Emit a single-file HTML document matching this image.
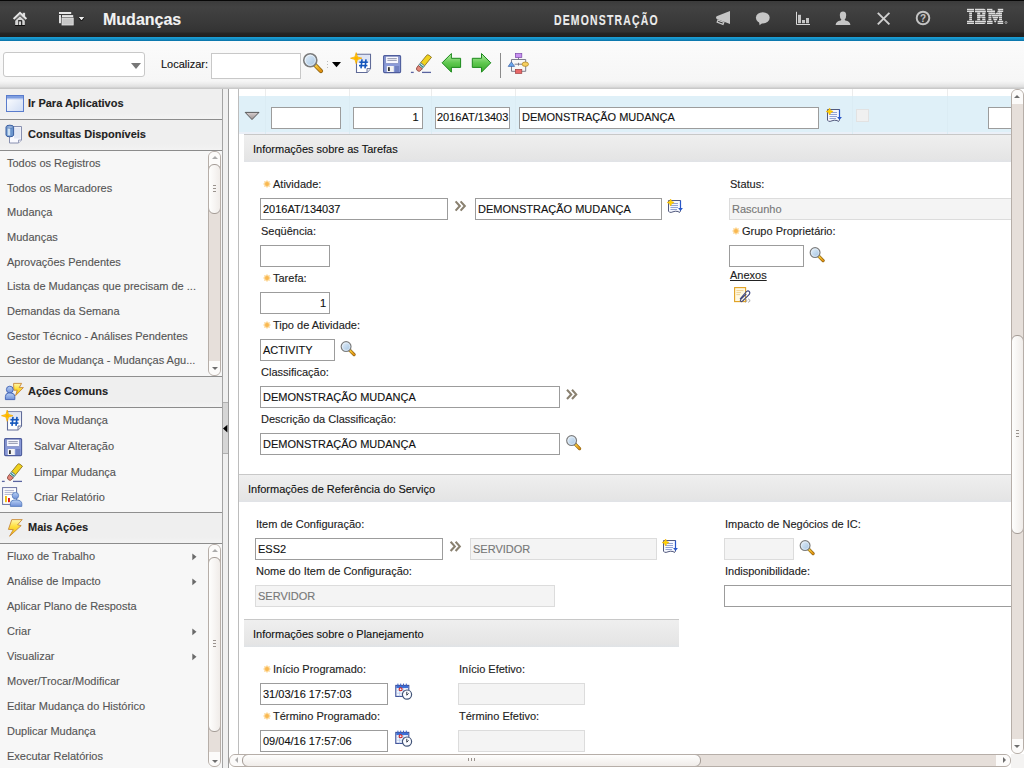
<!DOCTYPE html>
<html><head><meta charset="utf-8">
<style>
*{box-sizing:border-box;margin:0;padding:0}
html,body{width:1024px;height:768px;overflow:hidden;background:#fff;font-family:"Liberation Sans",sans-serif;font-size:11px;color:#333}
.t,.lbl,.val,.li,.rov{-webkit-text-stroke:0.12px currentColor}
.a{position:absolute}
.t{position:absolute;white-space:nowrap;line-height:13px;font-size:11px}
#hdr{left:0;top:0;width:1024px;height:37px;background:linear-gradient(#070707 0,#070707 1px,#3b3b3b 1px,#424242 7px,#3d3d3d 16px,#363636 28px,#323232 32px,#262626 33px,#202020 37px)}
#blue{left:0;top:37px;width:1024px;height:4px;background:linear-gradient(#1c9ed4,#1592c9 50%,#0870a6)}
#tb{left:0;top:41px;width:1024px;height:48px;background:linear-gradient(#fbfbfb 0,#f6f6f6 40px,#ececec 43px,#dedede 46px,#c9c9c9 47px,#c9c9c9 48px)}
.inp{position:absolute;background:#fff;border:1px solid #9c9c9c;height:22px}
.ro{position:absolute;background:#f4f4f4;border:1px solid #dcdcdc;height:22px}
.lbl{position:absolute;white-space:nowrap;line-height:13px;font-size:11px;color:#222}
.val{position:absolute;white-space:nowrap;line-height:13px;font-size:11px;color:#111}
.rov{position:absolute;white-space:nowrap;line-height:13px;font-size:11px;color:#777}
.ast{position:absolute;width:8px;height:8px}
.lph{position:absolute;left:0;width:222px;height:31px;background:linear-gradient(#efefef 0,#efefef 80%,#f3f3f3 100%);border-bottom:1px solid #8c8c8c}
.lph .t{font-weight:bold;color:#222;left:28px}
.li{position:absolute;left:7px;white-space:nowrap;line-height:13px;font-size:11px;color:#555}
.sec{position:absolute;height:28px;background:linear-gradient(#efefef,#e5e5e5 88%,#e0e3e7);border-top:1px solid #c8c8c8}
.sec .t{color:#111}
.vsb{position:absolute;background:#e6dfda;border:1px solid #b6aea8;border-radius:6px;overflow:hidden}
.vsb .c1,.vsb .c2,.hsb .c1,.hsb .c2{position:absolute;background:#fcfbfa}
.vsb .c1{left:0;right:0;top:0;height:14px}
.vsb .c2{left:0;right:0;bottom:0;height:14px}
.vsb .th{position:absolute;left:-1px;right:-1px;background:linear-gradient(90deg,#fefefd,#f0ece9);border:1px solid #a49c96;border-radius:6px}
.hsb{position:absolute;background:#e6dfda;border:1px solid #b6aea8;border-radius:6px;overflow:hidden}
.hsb .c1{top:0;bottom:0;left:0;width:14px}
.hsb .c2{top:0;bottom:0;right:0;width:14px}
.hsb .th{position:absolute;top:-1px;bottom:-1px;background:linear-gradient(#fefefd,#f0ece9);border:1px solid #a49c96;border-radius:6px}
.tu{position:absolute;width:0;height:0;border-left:3px solid transparent;border-right:3px solid transparent;border-bottom:3px solid #6e6e6e}
.td{position:absolute;width:0;height:0;border-left:3px solid transparent;border-right:3px solid transparent;border-top:3px solid #6e6e6e}
.tl{position:absolute;width:0;height:0;border-top:3px solid transparent;border-bottom:3px solid transparent;border-right:3px solid #ababab}
.tr{position:absolute;width:0;height:0;border-top:3px solid transparent;border-bottom:3px solid transparent;border-left:3px solid #6e6e6e}
.grv{position:absolute;width:3px;height:1px;background:#9a938e}
.grh{position:absolute;width:1px;height:3px;background:#9a938e}
</style></head><body>
<!-- HEADER -->
<div id="hdr" class="a"></div>
<div id="blue" class="a"></div>
<div class="t" style="left:103px;top:11px;font-size:16px;line-height:18px;font-weight:bold;color:#f2f2f2">Mudanças</div>
<div class="t" style="left:554px;top:12px;font-size:14px;line-height:17px;font-weight:bold;color:#ececec;letter-spacing:1.6px;transform:scaleX(0.745);transform-origin:0 0">DEMONSTRAÇÃO</div>

<!-- TOOLBAR -->
<div id="tb" class="a"></div>
<div class="a" style="left:3px;top:52px;width:142px;height:25px;background:#fff;border:1px solid #c8c8c8;border-radius:3px"></div>
<div class="a" style="left:131px;top:63px;width:0;height:0;border-left:5px solid transparent;border-right:5px solid transparent;border-top:6px solid #777"></div>
<div class="t" style="left:161px;top:58px;color:#111">Localizar:</div>
<div class="a" style="left:211px;top:53px;width:90px;height:26px;background:#fff;border:1px solid #c8c8c8"></div>

<!-- LEFT PANEL -->
<div class="a" style="left:0;top:89px;width:222px;height:679px;background:#f7f7f7"></div>
<div class="lph" style="top:89px"><div class="t" style="top:8px">Ir Para Aplicativos</div></div>
<div class="lph" style="top:120px"><div class="t" style="top:8px">Consultas Disponíveis</div></div>
<div class="li" style="top:157px">Todos os Registros</div>
<div class="li" style="top:181.67px">Todos os Marcadores</div>
<div class="li" style="top:206.33px">Mudança</div>
<div class="li" style="top:231px">Mudanças</div>
<div class="li" style="top:255.67px">Aprovações Pendentes</div>
<div class="li" style="top:280.33px">Lista de Mudanças que precisam de ...</div>
<div class="li" style="top:305px">Demandas da Semana</div>
<div class="li" style="top:329.67px">Gestor Técnico - Análises Pendentes</div>
<div class="li" style="top:354.33px">Gestor de Mudança - Mudanças Agu...</div>
<div class="a" style="left:0;top:376px;width:222px;height:1px;background:#8f8f8f"></div>
<div class="lph" style="top:377px"><div class="t" style="top:8px">Ações Comuns</div></div>
<div class="li" style="left:34px;top:414px">Nova Mudança</div>
<div class="li" style="left:34px;top:440px">Salvar Alteração</div>
<div class="li" style="left:34px;top:466px">Limpar Mudança</div>
<div class="li" style="left:34px;top:491px">Criar Relatório</div>
<div class="a" style="left:0;top:512px;width:222px;height:1px;background:#8f8f8f"></div>
<div class="lph" style="top:513px"><div class="t" style="top:8px">Mais Ações</div></div>
<div class="li" style="top:550px">Fluxo de Trabalho</div>
<div class="li" style="top:575px">Análise de Impacto</div>
<div class="li" style="top:600px">Aplicar Plano de Resposta</div>
<div class="li" style="top:625px">Criar</div>
<div class="li" style="top:650px">Visualizar</div>
<div class="li" style="top:675px">Mover/Trocar/Modificar</div>
<div class="li" style="top:700px">Editar Mudança do Histórico</div>
<div class="li" style="top:725px">Duplicar Mudança</div>
<div class="li" style="top:750px">Executar Relatórios</div>

<!-- SPLITTER -->
<div class="a" style="left:222px;top:89px;width:7px;height:679px;background:#f0f0f0;border-left:1px solid #a4a4a4;border-right:1px solid #9c9c9c"></div>

<!-- MAIN -->
<div class="a" style="left:238px;top:89px;width:1px;height:665px;background:#bdbdbd"></div>
<!-- column lines top -->
<div class="a" style="left:265px;top:89px;width:1px;height:45px;background:#ececec"></div>
<div class="a" style="left:349px;top:89px;width:1px;height:45px;background:#ececec"></div>
<div class="a" style="left:431px;top:89px;width:1px;height:45px;background:#ececec"></div>
<div class="a" style="left:515px;top:89px;width:1px;height:45px;background:#ececec"></div>
<div class="a" style="left:852px;top:89px;width:1px;height:45px;background:#ececec"></div>
<div class="a" style="left:947px;top:89px;width:1px;height:45px;background:#ececec"></div>
<div class="a" style="left:239px;top:96px;width:772px;height:38px;background:linear-gradient(#dff0f8 0,#dff0f8 36px,#ebf0f8 36px)"></div>
<div class="a" style="left:265px;top:96px;width:1px;height:38px;background:#dbecf4"></div>
<div class="a" style="left:349px;top:96px;width:1px;height:38px;background:#dbecf4"></div>
<div class="a" style="left:431px;top:96px;width:1px;height:38px;background:#dbecf4"></div>
<div class="a" style="left:515px;top:96px;width:1px;height:38px;background:#dbecf4"></div>
<div class="a" style="left:852px;top:96px;width:1px;height:38px;background:#dbecf4"></div>
<div class="a" style="left:947px;top:96px;width:1px;height:38px;background:#dbecf4"></div>
<div class="inp" style="left:271px;top:107px;width:70px"></div>
<div class="inp" style="left:353px;top:107px;width:70px"></div>
<div class="val" style="left:353px;top:111px;width:65.5px;text-align:right">1</div>
<div class="inp" style="left:435px;top:107px;width:75px"></div>
<div class="val" style="left:437px;top:111px">2016AT/13403</div>
<div class="inp" style="left:519px;top:107px;width:300px"></div>
<div class="val" style="left:522px;top:111px">DEMONSTRAÇÃO MUDANÇA</div>
<div class="a" style="left:856px;top:109px;width:13px;height:13px;background:#f2f2f2;border:1px solid #e2e2e2"></div>
<div class="inp" style="left:988px;top:107px;width:40px"></div>

<!-- SECTION 1 -->
<div class="sec" style="left:244px;top:134px;width:767px"></div>
<div class="t" style="left:253px;top:143px;color:#111">Informações sobre as Tarefas</div>

<div class="lbl" style="left:273px;top:178px">Atividade:</div>
<div class="inp" style="left:260px;top:198px;width:188px"></div>
<div class="val" style="left:263px;top:203px">2016AT/134037</div>
<div class="inp" style="left:475px;top:198px;width:187px"></div>
<div class="val" style="left:478px;top:203px">DEMONSTRAÇÃO MUDANÇA</div>

<div class="lbl" style="left:261px;top:225px">Seqüência:</div>
<div class="inp" style="left:260px;top:245px;width:70px"></div>
<div class="lbl" style="left:273px;top:272px">Tarefa:</div>
<div class="inp" style="left:260px;top:292px;width:70px"></div>
<div class="val" style="left:260px;top:297px;width:66px;text-align:right">1</div>
<div class="lbl" style="left:273px;top:319px">Tipo de Atividade:</div>
<div class="inp" style="left:260px;top:339px;width:75px"></div>
<div class="val" style="left:263px;top:344px">ACTIVITY</div>
<div class="lbl" style="left:261px;top:366px">Classificação:</div>
<div class="inp" style="left:260px;top:386px;width:300px"></div>
<div class="val" style="left:263px;top:391px">DEMONSTRAÇÃO MUDANÇA</div>
<div class="lbl" style="left:261px;top:413px">Descrição da Classificação:</div>
<div class="inp" style="left:260px;top:433px;width:300px"></div>
<div class="val" style="left:263px;top:438px">DEMONSTRAÇÃO MUDANÇA</div>

<div class="lbl" style="left:730px;top:178px">Status:</div>
<div class="ro" style="left:729px;top:198px;width:300px"></div>
<div class="rov" style="left:732px;top:203px">Rascunho</div>
<div class="lbl" style="left:742px;top:225px">Grupo Proprietário:</div>
<div class="inp" style="left:729px;top:245px;width:75px"></div>
<div class="lbl" style="left:730px;top:269px;text-decoration:underline">Anexos</div>

<!-- SECTION 2 -->
<div class="sec" style="left:239px;top:474px;width:772px"></div>
<div class="t" style="left:248px;top:483px;color:#111">Informações de Referência do Serviço</div>
<div class="lbl" style="left:256px;top:518px">Item de Configuração:</div>
<div class="inp" style="left:255px;top:538px;width:188px"></div>
<div class="val" style="left:258px;top:543px">ESS2</div>
<div class="ro" style="left:470px;top:538px;width:187px"></div>
<div class="rov" style="left:473px;top:543px">SERVIDOR</div>
<div class="lbl" style="left:256px;top:565px">Nome do Item de Configuração:</div>
<div class="ro" style="left:255px;top:585px;width:300px"></div>
<div class="rov" style="left:258px;top:590px">SERVIDOR</div>
<div class="lbl" style="left:725px;top:518px">Impacto de Negócios de IC:</div>
<div class="ro" style="left:724px;top:538px;width:70px"></div>
<div class="lbl" style="left:725px;top:565px">Indisponibilidade:</div>
<div class="inp" style="left:724px;top:585px;width:300px"></div>

<!-- SECTION 3 -->
<div class="sec" style="left:244px;top:619px;width:435px"></div>
<div class="t" style="left:253px;top:628px;color:#111">Informações sobre o Planejamento</div>
<div class="lbl" style="left:273px;top:663px">Início Programado:</div>
<div class="inp" style="left:260px;top:683px;width:128px"></div>
<div class="val" style="left:263px;top:688px">31/03/16 17:57:03</div>
<div class="lbl" style="left:273px;top:710px">Término Programado:</div>
<div class="inp" style="left:260px;top:730px;width:128px"></div>
<div class="val" style="left:263px;top:735px">09/04/16 17:57:06</div>
<div class="lbl" style="left:459px;top:663px">Início Efetivo:</div>
<div class="ro" style="left:458px;top:683px;width:127px"></div>
<div class="lbl" style="left:459px;top:710px">Término Efetivo:</div>
<div class="ro" style="left:458px;top:730px;width:127px"></div>

<!-- SCROLLBARS -->
<div class="a" style="left:1011px;top:754px;width:13px;height:14px;background:#f4f3f2"></div>
<div class="vsb" style="left:1011px;top:89px;width:13px;height:665px">
 <div class="c1"></div><div class="c2"></div>
 <div class="th" style="top:245px;height:199px"></div>
</div>
<div class="tu" style="left:1014px;top:95px"></div>
<div class="td" style="left:1014px;top:745px"></div>
<div class="grv" style="left:1016px;top:430px"></div><div class="grv" style="left:1016px;top:433px"></div><div class="grv" style="left:1016px;top:436px"></div>
<div class="hsb" style="left:229px;top:754px;width:782px;height:13px">
 <div class="c1"></div><div class="c2"></div>
 <div class="th" style="left:12px;width:459px"></div>
</div>
<div class="tl" style="left:235px;top:757px"></div>
<div class="tr" style="left:1003px;top:757px"></div>
<div class="grh" style="left:468px;top:758px"></div><div class="grh" style="left:471px;top:758px"></div><div class="grh" style="left:474px;top:758px"></div>
<!-- left list scrollbars -->
<div class="vsb" style="left:208px;top:151px;width:13px;height:225px">
 <div class="c1"></div><div class="c2"></div>
 <div class="th" style="top:12px;height:50px"></div>
</div>
<div class="tu" style="left:212px;top:156px;border-bottom-color:#ababab"></div>
<div class="td" style="left:212px;top:367px"></div>
<div class="grv" style="left:213px;top:185px"></div><div class="grv" style="left:213px;top:188px"></div><div class="grv" style="left:213px;top:191px"></div>
<div class="vsb" style="left:208px;top:544px;width:13px;height:223px">
 <div class="c1"></div><div class="c2"></div>
 <div class="th" style="top:12px;height:175px"></div>
</div>
<div class="tu" style="left:212px;top:549px;border-bottom-color:#ababab"></div>
<div class="td" style="left:212px;top:760px"></div>
<div class="grv" style="left:213px;top:640px"></div><div class="grv" style="left:213px;top:643px"></div><div class="grv" style="left:213px;top:646px"></div>
<!-- splitter handle -->
<div class="a" style="left:223px;top:402px;width:5px;height:52px;background:#d6d6d6;border-top:1px solid #b0b0b0;border-bottom:1px solid #b0b0b0"></div>

<!-- ICONS OVERLAY -->
<svg class="a" style="left:0;top:0" width="1024" height="768" viewBox="0 0 1024 768">
<defs>
<linearGradient id="gMag" x1="0" y1="0" x2="1" y2="1"><stop offset="0" stop-color="#e8f2fb"/><stop offset="1" stop-color="#9fc0e0"/></linearGradient>
<linearGradient id="gHandle" x1="0" y1="0" x2="1" y2="1"><stop offset="0" stop-color="#f8d040"/><stop offset="1" stop-color="#e09010"/></linearGradient>
<linearGradient id="gGreen" x1="0" y1="0" x2="0" y2="1"><stop offset="0" stop-color="#b8eca8"/><stop offset="0.5" stop-color="#60c850"/><stop offset="1" stop-color="#38a828"/></linearGradient>
<linearGradient id="gBolt" x1="0" y1="0" x2="0" y2="1"><stop offset="0" stop-color="#fff8b0"/><stop offset="0.4" stop-color="#ffe040"/><stop offset="1" stop-color="#f0b800"/></linearGradient>
<linearGradient id="gWin" x1="0" y1="0" x2="1" y2="1"><stop offset="0" stop-color="#ffffff"/><stop offset="1" stop-color="#cfdcf4"/></linearGradient>
<linearGradient id="gPerson" x1="0" y1="0" x2="0" y2="1"><stop offset="0" stop-color="#b8d0f4"/><stop offset="1" stop-color="#7090d8"/></linearGradient>
<linearGradient id="gTri" x1="0" y1="0" x2="0" y2="1"><stop offset="0" stop-color="#d8d0d0"/><stop offset="1" stop-color="#9a9090"/></linearGradient>

<symbol id="mag" viewBox="0 0 15 15" overflow="visible">
 <line x1="9.2" y1="9.2" x2="13.6" y2="13.6" stroke="#8a6010" stroke-width="3.2" stroke-linecap="round"/>
 <line x1="9.2" y1="9.2" x2="13.6" y2="13.6" stroke="url(#gHandle)" stroke-width="2" stroke-linecap="round"/>
 <circle cx="5.6" cy="5.6" r="4.9" fill="url(#gMag)" stroke="#7c7c7c" stroke-width="1.2"/>
 <circle cx="5.6" cy="5.6" r="3.8" fill="none" stroke="#fff" stroke-width="0.6" opacity="0.7"/>
</symbol>
<symbol id="dbl" viewBox="0 0 12 11" overflow="visible">
 <path d="M1,0.8 L5.2,5.4 L1,10" fill="none" stroke="#8a8170" stroke-width="2.1" stroke-linejoin="miter"/>
 <path d="M6,0.8 L10.2,5.4 L6,10" fill="none" stroke="#8a8170" stroke-width="2.1" stroke-linejoin="miter"/>
</symbol>
<symbol id="det" viewBox="0 0 20 20" overflow="visible">
 <path d="M4.5,4.5 H16.5 V15 L15.5,16.5 L14,15.5 Q11,14.8 9,15.8 Q7,16.8 5.5,16.2 L4.5,15.2 Z" fill="#f6f8ff" stroke="#525a7e" stroke-width="1"/>
 <g stroke="#93a4d6" stroke-width="1"><line x1="8" y1="7.5" x2="14" y2="7.5"/><line x1="6.5" y1="9.5" x2="14" y2="9.5"/><line x1="6.5" y1="11.5" x2="14" y2="11.5"/><line x1="6.5" y1="13.5" x2="13" y2="13.5"/></g>
 <line x1="16.5" y1="4.5" x2="16.5" y2="12.5" stroke="#2856c8" stroke-width="1.2"/>
 <path d="M14.1,12 L18.9,12 L16.5,15 Z" fill="#2856c8"/>
 <path d="M6.6,3 L7.7,5.4 L10.1,6.5 L7.7,7.6 L6.6,10 L5.5,7.6 L3.1,6.5 L5.5,5.4 Z" fill="#ffd200" stroke="#f2b000" stroke-width="0.6"/>
</symbol>
<symbol id="ast" viewBox="0 0 8 8" overflow="visible">
 <circle cx="4" cy="4" r="2.7" fill="#fbc46a"/>
 <g stroke="#fcd898" stroke-width="1.1">
 <line x1="4" y1="0.3" x2="4" y2="7.7"/><line x1="0.3" y1="4" x2="7.7" y2="4"/>
 <line x1="1.4" y1="1.4" x2="6.6" y2="6.6"/><line x1="6.6" y1="1.4" x2="1.4" y2="6.6"/></g>
 <circle cx="4" cy="4" r="1.9" fill="#f9b850"/>
</symbol>
<symbol id="newdoc" viewBox="0 0 20 20" overflow="visible">
 <path d="M5.5,1.3 H19.5 V15.5 L16,19.5 H5.5 Z" fill="#fff" stroke="#606b98" stroke-width="1.1"/>
 <rect x="6.2" y="2" width="12.6" height="8" fill="#dfe5f5"/>
 <path d="M19.5,15.5 L16,15.5 L16,19.5" fill="#e8e8e8" stroke="#606b98" stroke-width="0.9"/>
 <g stroke="#1456bc" stroke-width="1.6"><line x1="11" y1="6.4" x2="10" y2="15.4"/><line x1="15" y1="6.4" x2="14" y2="15.4"/><line x1="8.4" y1="9.2" x2="16.8" y2="9.2"/><line x1="8" y1="12.6" x2="16.4" y2="12.6"/></g>
 <path d="M5.2,-0.4 L6.5,3.9 L10.9,5.2 L6.5,6.5 L5.2,10.8 L3.9,6.5 L-0.5,5.2 L3.9,3.9 Z" fill="#ffd800" stroke="#f5a000" stroke-width="0.7"/>
 <circle cx="5.2" cy="5.2" r="1.8" fill="#ffb000"/>
</symbol>
<symbol id="save" viewBox="0 0 18 18" overflow="visible">
 <rect x="0.6" y="0.6" width="17" height="17" rx="1" fill="#8a9ad8" stroke="#4e5c9c" stroke-width="1.1"/>
 <rect x="2.8" y="1.4" width="12.6" height="7" fill="#f8f8ff" stroke="#6a78b0" stroke-width="0.5"/>
 <line x1="4.4" y1="3.6" x2="13.8" y2="3.6" stroke="#8a8ea8" stroke-width="0.9"/>
 <line x1="4.4" y1="5.4" x2="13.8" y2="5.4" stroke="#8a8ea8" stroke-width="0.9"/>
 <rect x="3.8" y="11" width="7" height="6" fill="#f4f4f4"/>
 <rect x="5" y="12.2" width="1.8" height="3.8" fill="#303030"/>
 <rect x="11.8" y="11" width="4.4" height="6" fill="#7080c0"/>
</symbol>
<symbol id="eraser" viewBox="0 0 22 20" overflow="visible">
 <line x1="0.9" y1="18.4" x2="3.7" y2="18.4" stroke="#5a64a0" stroke-width="1.3"/>
 <line x1="12" y1="18.4" x2="21" y2="18.4" stroke="#5a64a0" stroke-width="1.3"/>
 <g transform="translate(8.3 15.6) rotate(-51)">
   <path d="M6.8,-2.5 H16.4 Q17.8,-2.5 17.9,-0.6 L17.9,2.5 H6.8 Z" fill="#f0d21e" stroke="#8a7020" stroke-width="0.8"/>
   <rect x="3.2" y="-2.5" width="3.6" height="5" fill="#eaf6f6" stroke="#5a8088" stroke-width="0.8"/>
   <line x1="5" y1="-2.3" x2="5" y2="2.3" stroke="#2a8a8a" stroke-width="1.2"/>
   <path d="M3.2,-2.5 H1.2 Q-1.4,-2.5 -1.4,0 Q-1.4,2.5 1.2,2.5 H3.2 Z" fill="#e4887a" stroke="#8a4a40" stroke-width="0.8"/>
 </g>
</symbol>
<symbol id="cal" viewBox="0 0 18 18" overflow="visible">
 <rect x="0.8" y="2.4" width="13" height="11" fill="#f4f8ff" stroke="#3a4e98" stroke-width="1.1"/>
 <rect x="1.3" y="2.9" width="12" height="2.2" fill="#3c70d8"/>
 <g fill="#3a60c8"><rect x="2.4" y="0.6" width="1" height="2.6"/><rect x="5.2" y="0.6" width="1" height="2.6"/><rect x="8" y="0.6" width="1" height="2.6"/><rect x="10.8" y="0.6" width="1" height="2.6"/></g>
 <g stroke="#a8c0e8" stroke-width="0.6"><line x1="1.3" y1="7.4" x2="13.3" y2="7.4"/><line x1="1.3" y1="10.2" x2="13.3" y2="10.2"/><line x1="4.6" y1="5" x2="4.6" y2="13.4"/><line x1="8.2" y1="5" x2="8.2" y2="13.4"/></g>
 <circle cx="5.6" cy="6.2" r="1.5" fill="none" stroke="#d02020" stroke-width="1.1"/>
 <circle cx="12" cy="11.6" r="4.6" fill="#fbfcff" stroke="#425478" stroke-width="1.2"/>
 <path d="M11.8,8.8 L11.8,12.2 L13.6,10.4" fill="none" stroke="#303848" stroke-width="1"/>
</symbol>
</defs>

<!-- header icons -->
<g>
 <path d="M15.2,19.2 L20,14.6 L24.8,19.2 V25 H21.8 V20.6 H18.2 V25 H15.2 Z" fill="#d4d4d4"/>
 <path d="M18.2,20.6 H21.8 V25" fill="none" stroke="#111" stroke-width="0.8"/>
 <rect x="19" y="21.4" width="2" height="3.6" fill="#cfcfcf"/>
 <rect x="22.7" y="12.8" width="2.4" height="4.2" fill="#dadada"/>
 <polyline points="13.6,19 20,12.9 26.4,19" fill="none" stroke="#e6e6e6" stroke-width="2"/>
 <polyline points="14.8,20.5 20,15.6 25.2,20.5" fill="none" stroke="#101010" stroke-width="0.9"/>
 <line x1="15" y1="25.5" x2="25" y2="25.5" stroke="#111" stroke-width="1"/>
</g>
<g>
 <rect x="59" y="12" width="12.2" height="2" fill="#e8e8e8"/>
 <rect x="59" y="15" width="2" height="8.2" fill="#e0e0e0"/>
 <rect x="62" y="15.1" width="11.2" height="2" fill="#e8e8e8"/>
 <rect x="62" y="18" width="11.2" height="7" fill="#c8c8c8" stroke="#e4e4e4" stroke-width="0.8"/>
 <path d="M78.8,17.8 L81.5,21 L84.2,17.8" fill="none" stroke="#080808" stroke-width="1"/><path d="M78.8,17 L84.2,17 L81.5,20.2 Z" fill="#eeeeee"/>
</g>
<g fill="#c6c6c6">
 <path d="M730,10.9 V23.9 L723.5,21.4 L716.6,18.9 Q715.4,17.6 716.6,16.3 Z"/>
 <path d="M718,20.1 L723.8,22.3 L723,24.4 L717.2,22.2 Z" fill="#1c1c1c" stroke="#c6c6c6" stroke-width="1.3"/>
 <ellipse cx="762.8" cy="17.8" rx="6.9" ry="5.6"/>
 <path d="M759,21.5 L759.6,25.2 L763,22.6 Z"/>
 <path d="M796.5,11.8 V24.5 H810" fill="none" stroke="#d8d8d8" stroke-width="1"/>
 <rect x="798" y="14.8" width="3" height="8.4"/><rect x="802" y="20" width="3" height="3.2"/><rect x="806" y="18" width="3" height="5.2"/>
 <path d="M843,11.6 Q846,11.6 846.2,15 Q846.2,18.4 844.6,19.8 L845.4,20.6 Q850,21.4 850.4,25 H835.6 Q836,21.4 840.6,20.6 L841.4,19.8 Q839.8,18.4 839.8,15 Q840,11.6 843,11.6 Z"/>
</g>
<g>
 <line x1="877.8" y1="12.8" x2="889.4" y2="24.4" stroke="#d0d0d0" stroke-width="1.9"/>
 <line x1="889.4" y1="12.8" x2="877.8" y2="24.4" stroke="#d0d0d0" stroke-width="1.9"/>
 <circle cx="923" cy="18" r="6.3" fill="none" stroke="#c4c4c4" stroke-width="1.9"/>
 <text x="923" y="22" text-anchor="middle" font-family="Liberation Sans" font-weight="bold" font-size="10" fill="#c4c4c4">?</text>
</g>
<g fill="#dcdcdc">
 <clipPath id="ibmclip"><rect x="960" y="8.6" width="50" height="1.3"/><rect x="960" y="10.6" width="50" height="1.3"/><rect x="960" y="12.6" width="50" height="1.3"/><rect x="960" y="14.6" width="50" height="1.3"/><rect x="960" y="16.6" width="50" height="1.3"/><rect x="960" y="18.6" width="50" height="1.3"/><rect x="960" y="20.6" width="50" height="1.3"/><rect x="960" y="22.6" width="50" height="1.3"/></clipPath>
 <g clip-path="url(#ibmclip)">
  <rect x="967" y="8.6" width="7" height="3.4"/><rect x="969.2" y="12" width="2.8" height="8.6"/><rect x="967" y="20.6" width="7" height="3.4"/>
  <path d="M975,8.6 H984 Q986,9.5 986,12 V12.6 H975 Z"/><rect x="977.2" y="12" width="3" height="8.6"/><rect x="982.2" y="12" width="3.2" height="3"/><rect x="977.2" y="14.6" width="8" height="3"/><rect x="982.2" y="17" width="3.2" height="3.6"/><path d="M975,20.6 H986 V21 Q986,24 984,24 H975 Z"/>
  <rect x="987" y="8.6" width="5.4" height="3.4"/><rect x="997.8" y="8.6" width="5.4" height="3.4"/><rect x="988.4" y="12" width="3" height="8.6"/><rect x="999" y="12" width="3" height="8.6"/><rect x="987" y="20.6" width="5.6" height="3.4"/><rect x="997.6" y="20.6" width="5.6" height="3.4"/>
  <path d="M991,10 L995,10 L995.1,14 L999,10 H1000 V14 L995.1,23.6 L991,14 Z"/>
 </g>
 <circle cx="1006" cy="22.5" r="1" fill="none" stroke="#cfcfcf" stroke-width="0.7"/>
</g>

<!-- toolbar icons -->
<use href="#mag" x="302.8" y="52.8" width="20" height="20"/>
<g fill="#bcbcbc"><rect x="327" y="61" width="1" height="1"/><rect x="327" y="64" width="1" height="1"/><rect x="327" y="67" width="1" height="1"/></g>
<path d="M332,62 L341,62 L336.5,67.2 Z" fill="#000"/>
<use href="#newdoc" x="351" y="53" width="20" height="20"/>
<use href="#save" x="383" y="55" width="18" height="18"/>
<use href="#eraser" x="410" y="54" width="22" height="20"/>
<path d="M442.1,62.8 L451.4,53.5 V58.3 H460.6 V67.4 H451.4 V72.2 Z" fill="url(#gGreen)" stroke="#1c8a1c" stroke-width="1"/>
<path d="M490.8,62.8 L481.5,53.5 V58.3 H472.3 V67.4 H481.5 V72.2 Z" fill="url(#gGreen)" stroke="#1c8a1c" stroke-width="1"/>
<rect x="500" y="53" width="1" height="25" fill="#8a8a8a"/>
<g>
 <path d="M518.5,57.4 V59.5 M511.5,64.2 V59.5 H525.7 V64.2 M511.5,64.2 V71.3 H525.7 V64.2 M514.6,64.2 H522 M518.5,62.8 V65.6" fill="none" stroke="#707080" stroke-width="0.9"/>
 <rect x="515.4" y="53.6" width="6.4" height="3.9" fill="#c890f0" stroke="#7848a8" stroke-width="0.7"/>
 <path d="M508.2,66.4 L511.4,61.9 L514.6,66.4 Z" fill="#6aa8f0" stroke="#3a60a0" stroke-width="0.7"/>
 <ellipse cx="525.3" cy="64.2" rx="3.2" ry="2.2" fill="#f8d060" stroke="#a88020" stroke-width="0.7"/>
 <rect x="515.4" y="69.4" width="6.4" height="4" fill="#e86868" stroke="#a04040" stroke-width="0.7"/>
</g>

<!-- left panel icons -->
<g>
 <rect x="6.5" y="95.5" width="17" height="16" fill="url(#gWin)" stroke="#5a7ccc" stroke-width="1"/>
 <rect x="7" y="96" width="16" height="2.4" fill="#7e9ee0"/>
 <line x1="7" y1="98.8" x2="23" y2="98.8" stroke="#9ab2e8" stroke-width="0.8"/>
</g>
<g>
 <path d="M9.5,126.5 H21.5 V140 L18.5,143 H9.5 Z" fill="#fafaff" stroke="#8890b0" stroke-width="1"/>
 <rect x="14" y="127.5" width="6.6" height="11" fill="#e4e8f4"/>
 <path d="M21.5,140 H18.5 V143" fill="#e8e8f0" stroke="#8890b0" stroke-width="0.8"/>
 <path d="M6,127 Q6,125.2 9.8,125.2 Q13.6,125.2 13.6,127 V135 Q13.6,136.8 9.8,136.8 Q6,136.8 6,135 Z" fill="#6a94cc" stroke="#3a5ea0" stroke-width="1"/>
 <rect x="7.6" y="127.8" width="2.6" height="7.6" fill="#cde0f2"/>
 <ellipse cx="9.8" cy="127" rx="3.4" ry="1.2" fill="#a8c4e8" stroke="#3a5ea0" stroke-width="0.6"/>
</g>
<g>
 <path d="M13.6,383.4 H21.6 L19.2,387.6 H23.4 L15.6,395.6 L17.2,390.2 H13.8 Z" fill="url(#gBolt)" stroke="#c88838" stroke-width="0.9"/>
 <circle cx="9.8" cy="389.6" r="3.4" fill="url(#gPerson)" stroke="#4a6ab8" stroke-width="1"/>
 <path d="M5.4,399.6 V396.4 Q5.6,393.2 8.6,393 H11 Q14.6,393.2 14.8,396.4 V399.6 Z" fill="url(#gPerson)" stroke="#4a6ab8" stroke-width="1"/>
</g>
<use href="#newdoc" x="2" y="410.5" width="20" height="20"/>
<use href="#save" x="4" y="438" width="18" height="18"/>
<use href="#eraser" x="1" y="463" width="22" height="20"/>
<g>
 <rect x="2.6" y="487.6" width="14" height="16.8" fill="#fff" stroke="#6870a0" stroke-width="1"/>
 <g stroke="#9aa0c0" stroke-width="0.8"><line x1="4.6" y1="490.4" x2="14" y2="490.4"/><line x1="4.6" y1="492.4" x2="14" y2="492.4"/><line x1="4.6" y1="494.4" x2="12" y2="494.4"/></g>
 <rect x="5" y="496" width="1.9" height="6.2" fill="#f0c010"/>
 <rect x="8" y="498" width="1.9" height="4.2" fill="#e01818"/>
 <path d="M10.4,506.4 V503.2 Q10.8,500.2 14,500 H17 Q21.6,500.4 21.8,503.6 V506.4 Z" fill="url(#gPerson)" stroke="#5a80c0" stroke-width="0.9"/>
 <circle cx="15.4" cy="495.6" r="3.2" fill="url(#gPerson)" stroke="#5a80c0" stroke-width="0.9"/>
</g>
<path d="M11.8,519.6 H22.2 L17.6,524.8 L21.2,525.6 L9.6,536.2 L13.3,529.6 L8.4,529.4 Z" fill="url(#gBolt)" stroke="#c88a3a" stroke-width="0.9"/>
<g fill="#6a6a6a">
 <path d="M192.3,553.4 L196.5,556.8 L192.3,560.2 Z"/>
 <path d="M192.3,578.4 L196.5,581.8 L192.3,585.2 Z"/>
 <path d="M192.3,628.4 L196.5,631.8 L192.3,635.2 Z"/>
 <path d="M192.3,653.4 L196.5,656.8 L192.3,660.2 Z"/>
</g>
<path d="M227.4,424.8 L223,428.6 L227.4,432.4 Z" fill="#000"/>

<!-- main icons -->
<path d="M245.2,112.4 H259 L252,119.6 Z" fill="url(#gTri)" stroke="#4a4a4a" stroke-width="0.9"/>
<use href="#det" x="823" y="105" width="20" height="20"/>
<rect x="856.5" y="109.5" width="12" height="12" fill="#f0f0f0" stroke="#e2e2e2"/>
<use href="#ast" x="263" y="180" width="8" height="8"/>
<use href="#ast" x="263" y="274" width="8" height="8"/>
<use href="#ast" x="263" y="321" width="8" height="8"/>
<use href="#ast" x="732" y="227" width="8" height="8"/>
<use href="#ast" x="263" y="665" width="8" height="8"/>
<use href="#ast" x="263" y="712" width="8" height="8"/>
<use href="#dbl" x="454.6" y="200.6" width="12" height="11"/>
<use href="#dbl" x="566" y="389" width="12" height="11"/>
<use href="#dbl" x="449.6" y="541" width="12" height="11"/>
<use href="#det" x="664" y="196" width="20" height="20"/>
<use href="#det" x="659" y="536" width="20" height="20"/>
<use href="#mag" x="340.5" y="341" width="15" height="15"/>
<use href="#mag" x="566" y="435" width="15" height="15"/>
<use href="#mag" x="809.5" y="247" width="15" height="15"/>
<use href="#mag" x="799.5" y="540" width="15" height="15"/>
<use href="#cal" x="395" y="683" width="18" height="18"/>
<use href="#cal" x="395" y="730" width="18" height="18"/>
<g>
 <rect x="734.6" y="287.6" width="11" height="14" fill="#fff8e0" stroke="#e0a020" stroke-width="1.1"/>
 <g stroke="#e8c070" stroke-width="0.7"><line x1="736.4" y1="290.6" x2="743.4" y2="290.6"/><line x1="736.4" y1="292.6" x2="741" y2="292.6"/><line x1="736.4" y1="294.6" x2="740" y2="294.6"/></g>
 <path d="M740,299 L746,292 Q748,290 749.4,291.6 Q750.6,293.2 748.6,295.2 L742.6,301 Q741.4,302 740.6,301.2 Q739.8,300.4 741,299.2 L746.2,294" fill="none" stroke="#404880" stroke-width="1.1"/>
 <path d="M745.2,298.8 L747.2,300.6 L745.2,302.4 M748.2,298.8 L750.2,300.6 L748.2,302.4" fill="none" stroke="#8a8a8a" stroke-width="0.8"/>
</g>
</svg>
</body></html>
